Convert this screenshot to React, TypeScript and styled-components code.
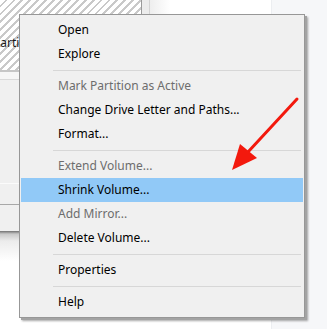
import React from 'react';
import styled, { createGlobalStyle } from 'styled-components';

const GlobalStyle = createGlobalStyle`
  html, body {
    margin: 0;
    padding: 0;
    width: 327px;
    height: 329px;
    overflow: hidden;
    background: #ffffff;
  }
`;

type Item = { label: string; disabled?: boolean; active?: boolean } | 'sep';

const items: Item[] = [
  { label: 'Open' },
  { label: 'Explore' },
  'sep',
  { label: 'Mark Partition as Active', disabled: true },
  { label: 'Change Drive Letter and Paths...' },
  { label: 'Format...' },
  'sep',
  { label: 'Extend Volume...', disabled: true },
  { label: 'Shrink Volume...', active: true },
  { label: 'Add Mirror...', disabled: true },
  { label: 'Delete Volume...' },
  'sep',
  { label: 'Properties' },
  'sep',
  { label: 'Help' },
];

const App: React.FC = () => {
  return (
    <Page>
      <GlobalStyle />
      <DiskPane>
        <TopRow>
          <Hatch>
            <VolumeLabel>Partition</VolumeLabel>
          </Hatch>
          <Gutter />
          <Blank />
        </TopRow>
        <Rule />
        <Strip />
        <PanelBody>
          <PanelLine $tone="light" $at={103} />
          <PanelLine $tone="dark" $at={20} />
        </PanelBody>
        <PanelShadow />
      </DiskPane>
      <SidePane />

      <Menu>
        {items.map((item, i) =>
          item === 'sep' ? (
            <Separator key={i} />
          ) : (
            <MenuItem key={i} $disabled={item.disabled} $active={item.active}>
              {item.label}
            </MenuItem>
          )
        )}
      </Menu>

      <Arrow width="327" height="329" viewBox="0 0 327 329">
        <line x1="297" y1="99" x2="248" y2="152" stroke="#f3190d" strokeWidth="3" strokeLinecap="round" />
        <polygon points="232,170 240,144 257,158" fill="#f3190d" />
      </Arrow>
    </Page>
  );
};

const Page = styled.div`
  position: relative;
  width: 327px;
  height: 329px;
  display: grid;
  grid-template-columns: 271px 1fr;
  font-family: 'Noto Sans', 'Open Sans', sans-serif;
  overflow: hidden;
`;

const DiskPane = styled.div`
  display: flex;
  flex-direction: column;
  background: #ffffff;
`;

const TopRow = styled.div`
  display: flex;
  height: 70px;
`;

const Hatch = styled.div`
  width: 142px;
  border-right: 1px solid #9a9a9a;
  background: repeating-linear-gradient(
    -45deg,
    #ffffff 0px,
    #ffffff 3.6px,
    #c9c9c9 3.6px,
    #c9c9c9 5.6px
  );
  padding-top: 34px;
  box-sizing: border-box;
`;

const VolumeLabel = styled.div`
  font-size: 12px;
  color: #1a1a1a;
  margin-left: -7px;
  line-height: 17px;
`;

const Gutter = styled.div`
  width: 7px;
  background: #ececec;
  border-right: 1px solid #d4d4d4;
`;

const Blank = styled.div`
  flex: 1;
  background: linear-gradient(90deg, #eeeeee 0px, #ffffff 20px);
`;

const Rule = styled.div`
  height: 2px;
  background: #c6c6c6;
`;

const Strip = styled.div`
  height: 7px;
  background: #f6f6f6;
  border-bottom: 1px solid #d9d9d9;
`;

const PanelBody = styled.div`
  height: 151px;
  background: #f0f0f0;
  display: flex;
  flex-direction: column;
  border-right: 1px solid #e2e2e2;
`;

const PanelLine = styled.div<{ $tone: 'light' | 'dark'; $at: number }>`
  margin-top: ${p => p.$at}px;
  height: 1px;
  background: ${p => (p.$tone === 'light' ? '#fbfbfb' : '#a8a8a8')};
`;

const PanelShadow = styled.div`
  height: 30px;
  background: linear-gradient(180deg, #707070 0px, #c8c8c8 3px, #ececec 10px, #ffffff 30px);
`;

const SidePane = styled.div`
  background: #f6f7f9;
  border-left: 1px solid #eceef1;
`;

const Menu = styled.div`
  position: absolute;
  left: 19px;
  top: 14px;
  width: 282px;
  padding: 3px 1px;
  background: #f0f0f0;
  border: 1px solid #979797;
  box-shadow: 2px 2px 0 #a3a3a3, 3px 3px 2px rgba(0, 0, 0, 0.35);
  display: flex;
  flex-direction: column;
`;

const MenuItem = styled.div<{ $disabled?: boolean; $active?: boolean }>`
  height: 24px;
  line-height: 24px;
  padding-left: 37px;
  font-size: 12px;
  color: ${p => (p.$disabled ? '#6d6d6d' : '#000000')};
  background: ${p => (p.$active ? '#91c9f7' : 'transparent')};
  white-space: nowrap;
`;

const Separator = styled.div`
  height: 1px;
  margin: 4px 2px 3px 32px;
  background: #d7d7d7;
`;

const Arrow = styled.svg`
  position: absolute;
  left: 0;
  top: 0;
  pointer-events: none;
`;

export default App;
